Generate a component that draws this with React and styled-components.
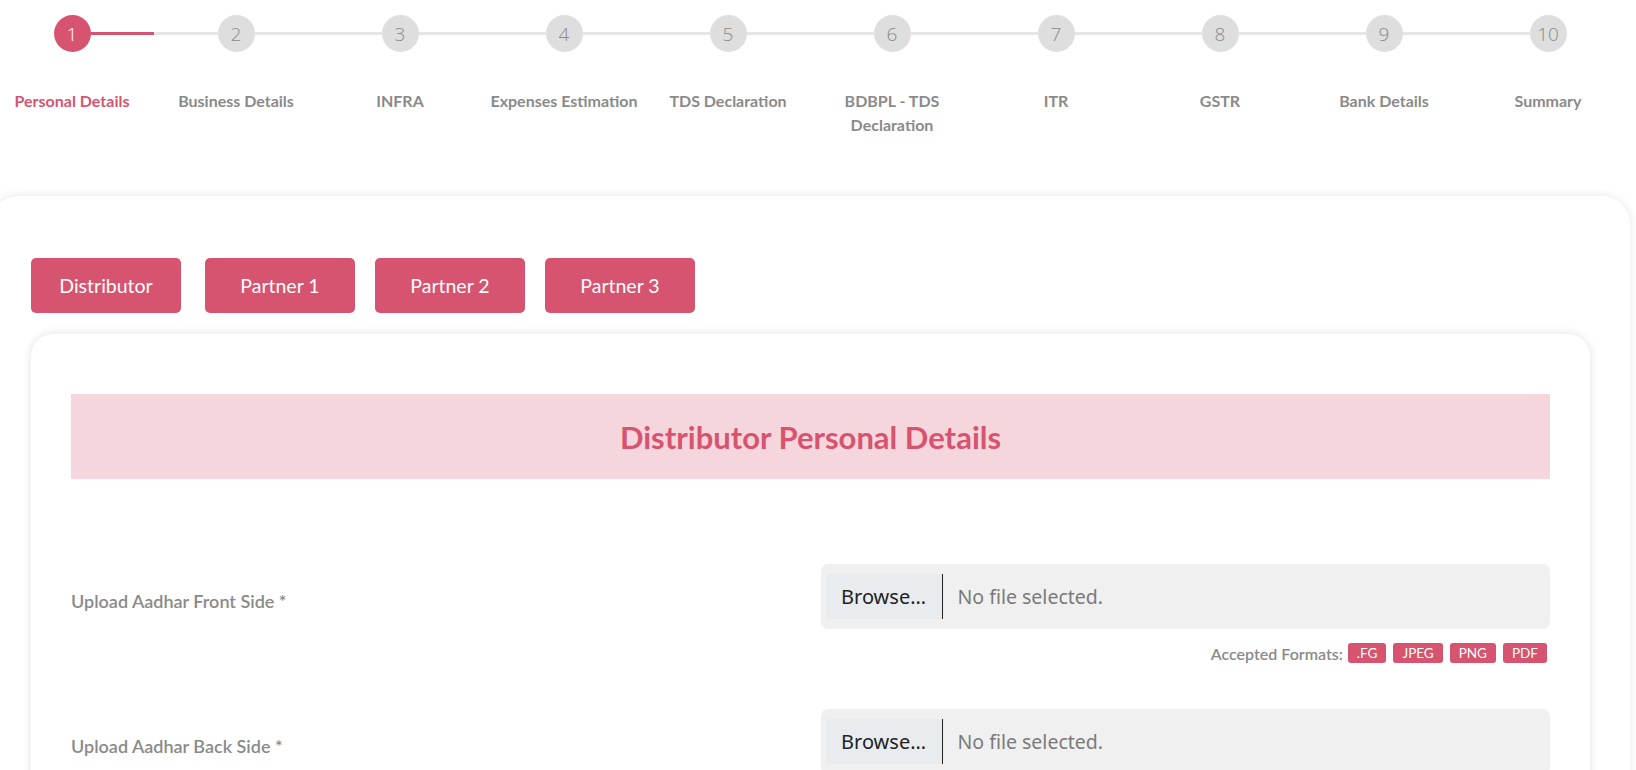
import React from 'react';
import styled, { createGlobalStyle } from 'styled-components';

const pink = '#d6546f';

const steps = [
  'Personal Details',
  'Business Details',
  'INFRA',
  'Expenses Estimation',
  'TDS Declaration',
  'BDBPL - TDS Declaration',
  'ITR',
  'GSTR',
  'Bank Details',
  'Summary',
];

const partners = ['Distributor', 'Partner 1', 'Partner 2', 'Partner 3'];
const formats = ['.FG', 'JPEG', 'PNG', 'PDF'];

const GlobalStyle = createGlobalStyle`
  body {
    margin: 0;
    background: #fff;
    font-family: Lato, "Open Sans", sans-serif;
    overflow: hidden;
  }
`;

const App = () => {
  return (
    <>
      <GlobalStyle />
      <Page>
        <Stepper>
          {steps.map((label, i) => (
            <Step key={label}>
              <StepHead>
                <Line $hidden={i === 0} />
                <Circle $active={i === 0}>{i + 1}</Circle>
                <Line $hidden={i === steps.length - 1} $active={i === 0} />
              </StepHead>
              <StepLabel $active={i === 0}>{label}</StepLabel>
            </Step>
          ))}
        </Stepper>

        <Card>
          <TabRow>
            {partners.map((p, i) => (
              <TabBtn key={p} $first={i === 0}>{p}</TabBtn>
            ))}
          </TabRow>

          <InnerCard>
            <Header>Distributor Personal Details</Header>

            <FieldRow>
              <FieldLabel>Upload Aadhar Front Side *</FieldLabel>
              <FieldCol>
                <FileBox>
                  <BrowseBtn>Browse…</BrowseBtn>
                  <FileText>No file selected.</FileText>
                </FileBox>
                <Formats>
                  <FormatsText>Accepted Formats:</FormatsText>
                  {formats.map((f) => (
                    <Badge key={f}>{f}</Badge>
                  ))}
                </Formats>
              </FieldCol>
            </FieldRow>

            <FieldRow>
              <FieldLabel>Upload Aadhar Back Side *</FieldLabel>
              <FieldCol>
                <FileBox>
                  <BrowseBtn>Browse…</BrowseBtn>
                  <FileText>No file selected.</FileText>
                </FileBox>
              </FieldCol>
            </FieldRow>
          </InnerCard>
        </Card>
      </Page>
    </>
  );
};

export default App;

const Page = styled.div`
  width: 1640px;
  margin-left: -10px;
  padding-top: 15px;
`;

const Stepper = styled.div`
  display: flex;
`;

const Step = styled.div`
  flex: 1;
  display: flex;
  flex-direction: column;
  align-items: center;
`;

const StepHead = styled.div`
  display: flex;
  align-items: center;
  width: 100%;
`;

const Line = styled.div`
  flex: 1;
  height: 3px;
  background: ${(p) => (p.$hidden ? 'transparent' : p.$active ? pink : '#e6e6e6')};
`;

const Circle = styled.div`
  width: 37px;
  height: 37px;
  border-radius: 50%;
  display: flex;
  align-items: center;
  justify-content: center;
  background: ${(p) => (p.$active ? pink : '#dedede')};
  color: ${(p) => (p.$active ? '#fff' : '#8a8a8a')};
  font-family: "Open Sans", sans-serif;
  font-weight: 300;
  font-size: 19px;
`;

const StepLabel = styled.div`
  margin-top: 37px;
  max-width: 156px;
  text-align: center;
  font-size: 16px;
  font-weight: 700;
  line-height: 24px;
  color: ${(p) => (p.$active ? pink : '#8a8a8a')};
`;

const Card = styled.div`
  margin-top: 59px;
  width: 1640px;
  box-sizing: border-box;
  padding: 62px 40px 40px 41px;
  background: #fff;
  border-radius: 28px;
  box-shadow: 0 0 10px rgba(0, 0, 0, 0.1);
  min-height: 700px;
`;

const TabRow = styled.div`
  display: flex;
  gap: 20px;
`;

const TabBtn = styled.button`
  width: 150px;
  height: 55px;
  margin-right: ${(p) => (p.$first ? '4px' : '0')};
  border: none;
  border-radius: 5px;
  background: ${pink};
  color: #fff;
  font-family: Lato, sans-serif;
  font-size: 19.5px;
`;

const InnerCard = styled.div`
  margin-top: 21px;
  padding: 60px 40px 40px;
  background: #fff;
  border-radius: 22px;
  box-shadow: 0 0 10px rgba(0, 0, 0, 0.12);
`;

const Header = styled.div`
  height: 85px;
  display: flex;
  align-items: center;
  justify-content: center;
  background: #f6d6dd;
  color: ${pink};
  font-size: 31px;
  font-weight: 700;
`;

const FieldRow = styled.div`
  display: grid;
  grid-template-columns: 1fr 1fr;
  column-gap: 20px;
  margin-top: 85px;

  & + & {
    margin-top: 46px;
  }
`;

const FieldLabel = styled.div`
  align-self: start;
  margin-top: 26px;
  font-size: 18px;
  font-weight: 600;
  color: #8a8a8a;
`;

const FieldCol = styled.div`
  display: flex;
  flex-direction: column;
`;

const FileBox = styled.div`
  height: 65px;
  box-sizing: border-box;
  padding: 10px 5px;
  display: flex;
  align-items: stretch;
  background: #f0f0f0;
  border-radius: 7px;
`;

const BrowseBtn = styled.div`
  width: 117px;
  box-sizing: border-box;
  display: flex;
  align-items: center;
  justify-content: center;
  background: #e9ecef;
  border-right: 1px solid #222;
  color: #222;
  font-family: "Noto Sans", sans-serif;
  font-size: 20px;
`;

const FileText = styled.div`
  display: flex;
  align-items: center;
  padding-left: 15px;
  color: #7a7a7a;
  font-family: "Noto Sans", sans-serif;
  font-size: 19.5px;
`;

const Formats = styled.div`
  display: flex;
  justify-content: flex-end;
  align-items: center;
  gap: 7px;
  margin-top: 14px;
  padding-right: 3px;
`;

const FormatsText = styled.span`
  margin-right: -2px;
  font-size: 16px;
  font-weight: 600;
  color: #8a8a8a;
`;

const Badge = styled.span`
  height: 20px;
  padding: 0 9px;
  display: flex;
  align-items: center;
  border-radius: 3px;
  background: ${pink};
  color: #fff;
  font-size: 13.5px;
`;
